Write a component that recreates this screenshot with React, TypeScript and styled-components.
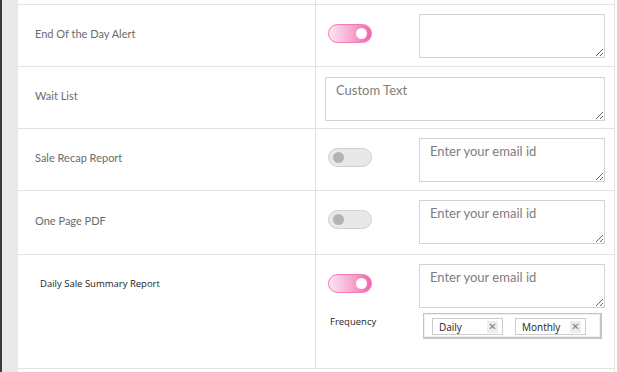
import React from 'react';
import styled, { createGlobalStyle } from 'styled-components';

const GlobalStyle = createGlobalStyle`
  html, body {
    margin: 0;
    padding: 0;
    background: #ffffff;
  }
  * {
    box-sizing: border-box;
  }
`;

const Page = styled.div`
  display: flex;
  width: 617px;
  height: 372px;
  overflow: hidden;
  background: #ffffff;
`;

const SideStrip = styled.div`
  width: 18px;
  flex-shrink: 0;
  background: #e9e9e9;
  border-left: 2px solid #3a3a3a;
`;

const Table = styled.div`
  width: 597px;
  border-right: 1px solid #e2e2e2;
  display: flex;
  flex-direction: column;
`;

const Row = styled.div<{ $height: number }>`
  display: grid;
  grid-template-columns: 298px 1fr;
  height: ${p => p.$height}px;
  border-bottom: 1px solid #e2e2e2;
  flex-shrink: 0;
`;

const LabelCell = styled.div<{ $top?: boolean }>`
  display: flex;
  align-items: ${p => (p.$top ? 'flex-start' : 'center')};
  padding: ${p => (p.$top ? '22px 0 0 22px' : '0 0 4px 17px')};
  border-right: 1px solid #e2e2e2;
`;

const Label = styled.span`
  font-family: Lato, 'Liberation Sans', sans-serif;
  font-size: 11px;
  color: #6b6b6b;
`;

const DarkLabel = styled.span`
  font-family: 'Open Sans', 'Liberation Sans', sans-serif;
  font-size: 9.5px;
  color: #1c1c1c;
`;

const ControlCell = styled.div<{ $pad?: number }>`
  display: flex;
  flex-direction: column;
  gap: 5px;
  padding: 9px 9px 0 ${p => p.$pad ?? 12}px;
`;

const ControlLine = styled.div`
  display: flex;
  align-items: flex-start;
  justify-content: space-between;
`;

const Toggle = styled.div<{ $on: boolean }>`
  position: relative;
  width: 44px;
  height: 19px;
  margin-top: 10px;
  border-radius: 10px;
  border: 1px solid ${p => (p.$on ? '#f27bb8' : '#cfcfcf')};
  background: ${p =>
    p.$on ? 'linear-gradient(90deg, #fbe6f1 0%, #f7a6cf 55%, #f064ad 100%)' : '#e8e8e8'};

  &::after {
    content: '';
    position: absolute;
    top: 3px;
    ${p => (p.$on ? 'right: 4px;' : 'left: 4px;')}
    width: 11px;
    height: 11px;
    border-radius: 50%;
    background: ${p => (p.$on ? '#ffffff' : '#b3b3b3')};
  }
`;

const TextArea = styled.textarea<{ $width: number }>`
  display: block;
  width: ${p => p.$width}px;
  height: 44px;
  margin: 0;
  padding: 4px 10px;
  border: 1px solid #d3d3d3;
  border-radius: 0;
  font-family: Lato, 'Open Sans', sans-serif;
  font-size: 13px;
  color: #333;
  background: #fff;
  outline: none;

  &::placeholder {
    color: #7d7d7d;
  }
`;

const FrequencyLine = styled.div`
  display: flex;
  align-items: flex-start;
  padding-left: 2px;
`;

const FrequencyLabel = styled(DarkLabel)`
  width: 93px;
  margin-top: 2px;
  flex-shrink: 0;
`;

const TagBox = styled.div`
  display: flex;
  gap: 12px;
  width: 179px;
  height: 26px;
  padding: 4px 0 0 8px;
  border: 1px solid #c4c4c4;
  border-right-width: 2px;
  border-bottom-width: 2px;
  box-shadow: inset 0 0 0 1px #f0f0f0;
`;

const Tag = styled.div`
  display: flex;
  align-items: center;
  justify-content: space-between;
  width: 71px;
  height: 17px;
  padding: 0 4px 0 6px;
  border: 1px solid #cdcdcd;
  background: #fff;
`;

const TagText = styled.span`
  font-family: 'Open Sans', 'Liberation Sans', sans-serif;
  font-size: 10px;
  color: #1c1c1c;
`;

const TagRemove = styled.span`
  display: flex;
  align-items: center;
  justify-content: center;
  width: 11px;
  height: 12px;
  background: #ececec;
  color: #7a7a7a;
  font-family: 'DejaVu Sans', sans-serif;
  font-size: 10px;
  font-weight: bold;
  line-height: 1;
`;

type Setting = {
  label: string;
  toggle?: boolean;
  placeholder?: string;
};

const settings: Setting[] = [
  { label: 'End Of the Day Alert', toggle: true, placeholder: '' },
  { label: 'Wait List', placeholder: 'Custom Text' },
  { label: 'Sale Recap Report', toggle: false, placeholder: 'Enter your email id' },
  { label: 'One Page PDF', toggle: false, placeholder: 'Enter your email id' },
];

const rowHeights = [61, 61, 61, 63];

export default function App() {
  return (
    <>
      <GlobalStyle />
      <Page>
        <SideStrip />
        <Table>
          <Row $height={5}>
            <LabelCell />
            <div />
          </Row>
          {settings.map((s, i) => (
            <Row key={s.label} $height={rowHeights[i] + 1}>
              <LabelCell>
                <Label>{s.label}</Label>
              </LabelCell>
              {s.toggle === undefined ? (
                <ControlCell $pad={9}>
                  <TextArea $width={280} placeholder={s.placeholder} style={{ marginTop: 1 }} />
                </ControlCell>
              ) : (
                <ControlCell>
                  <ControlLine>
                    <Toggle $on={s.toggle} />
                    <TextArea $width={186} placeholder={s.placeholder} />
                  </ControlLine>
                </ControlCell>
              )}
            </Row>
          ))}
          <Row $height={114}>
            <LabelCell $top>
              <DarkLabel>Daily Sale Summary Report</DarkLabel>
            </LabelCell>
            <ControlCell>
              <ControlLine>
                <Toggle $on />
                <TextArea $width={186} placeholder="Enter your email id" />
              </ControlLine>
              <FrequencyLine>
                <FrequencyLabel>Frequency</FrequencyLabel>
                <TagBox>
                  <Tag>
                    <TagText>Daily</TagText>
                    <TagRemove>✕</TagRemove>
                  </Tag>
                  <Tag>
                    <TagText>Monthly</TagText>
                    <TagRemove>✕</TagRemove>
                  </Tag>
                </TagBox>
              </FrequencyLine>
            </ControlCell>
          </Row>
        </Table>
      </Page>
    </>
  );
}
